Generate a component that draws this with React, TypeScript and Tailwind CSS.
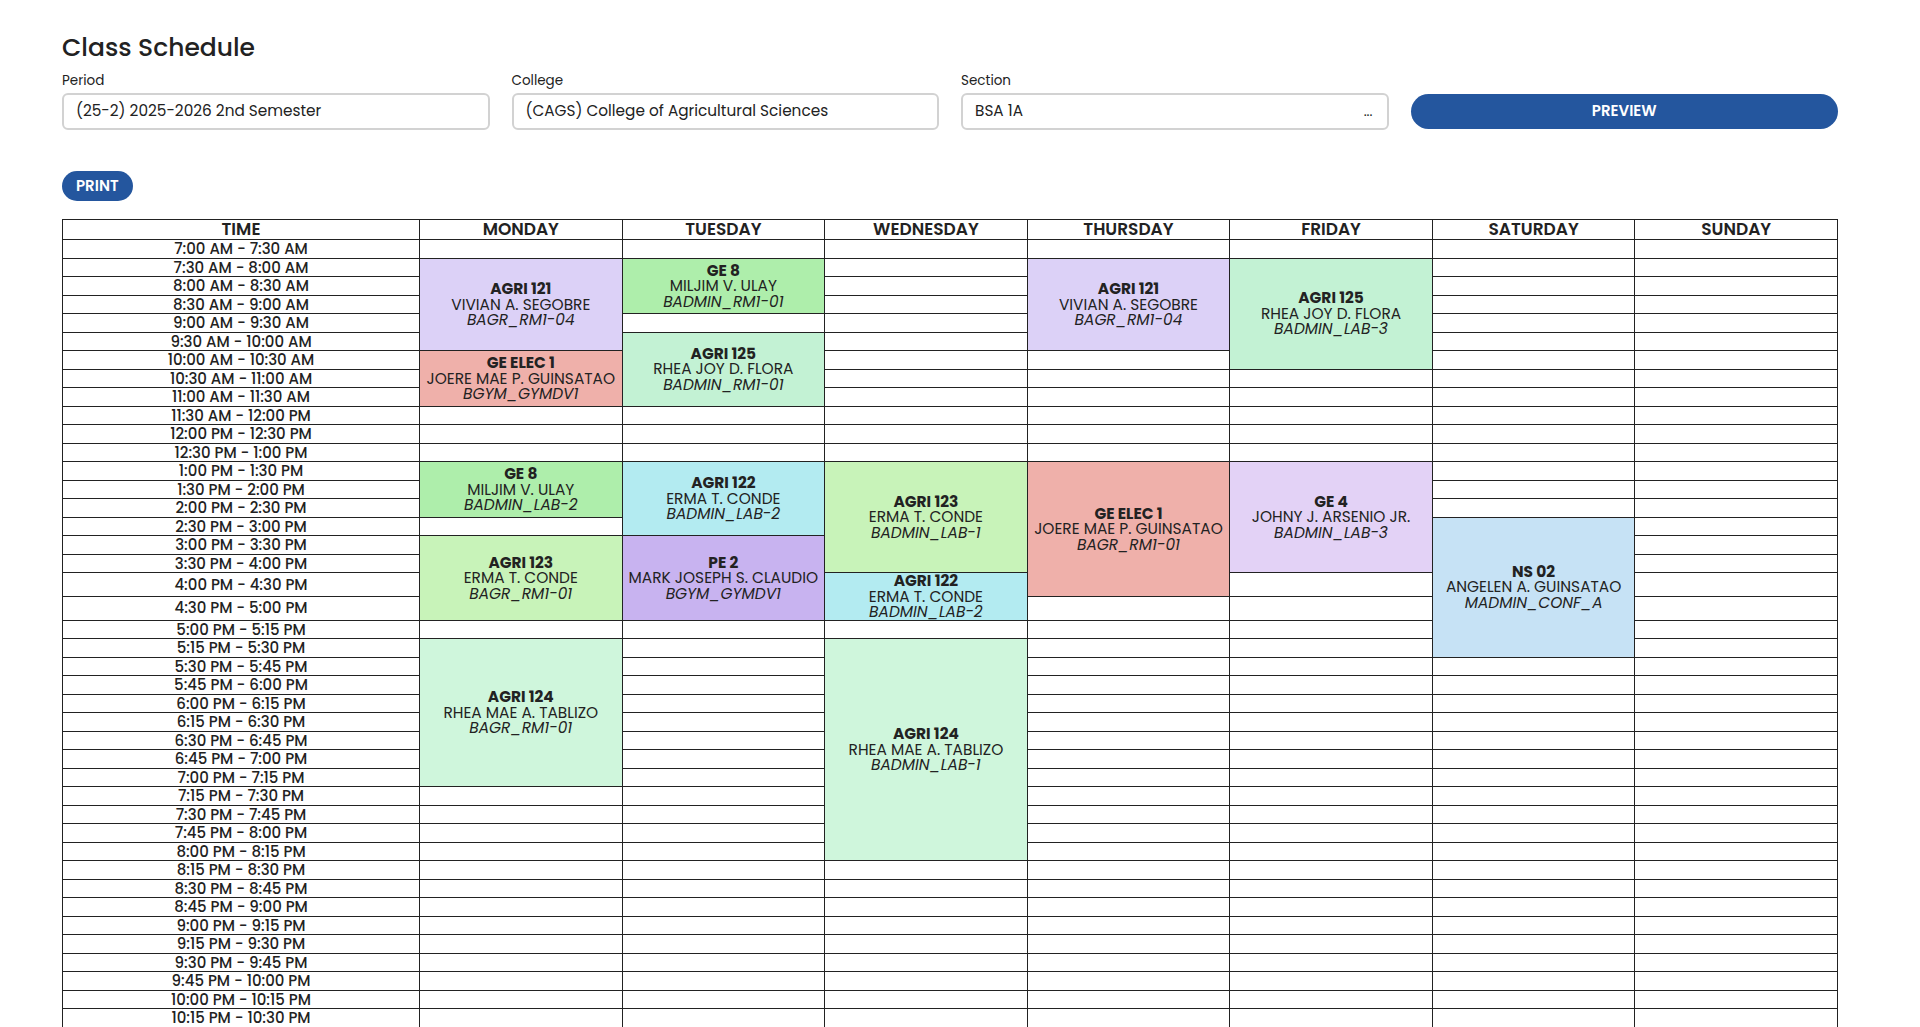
import { useMemo } from "react";

type Block = {
  day: number;
  start: number;
  span: number;
  code: string;
  teacher: string;
  room: string;
  bg: string;
};

const days = ["MONDAY", "TUESDAY", "WEDNESDAY", "THURSDAY", "FRIDAY", "SATURDAY", "SUNDAY"];

const fmt = (mins: number) => {
  const h = Math.floor(mins / 60);
  const m = mins % 60;
  const suffix = h >= 12 ? "PM" : "AM";
  const h12 = h % 12 === 0 ? 12 : h % 12;
  return `${h12}:${m.toString().padStart(2, "0")} ${suffix}`;
};

function buildSlots() {
  const slots: string[] = [];
  for (let t = 7 * 60; t < 17 * 60; t += 30) slots.push(`${fmt(t)} - ${fmt(t + 30)}`);
  for (let t = 17 * 60; t < 23 * 60; t += 15) slots.push(`${fmt(t)} - ${fmt(t + 15)}`);
  return slots;
}

const blocks: Block[] = [
  { day: 0, start: 1, span: 5, code: "AGRI 121", teacher: "VIVIAN A. SEGOBRE", room: "BAGR_RM1-04", bg: "bg-[#dcd1f7]" },
  { day: 0, start: 6, span: 3, code: "GE ELEC 1", teacher: "JOERE MAE P. GUINSATAO", room: "BGYM_GYMDV1", bg: "bg-[#efb0aa]" },
  { day: 0, start: 12, span: 3, code: "GE 8", teacher: "MILJIM V. ULAY", room: "BADMIN_LAB-2", bg: "bg-[#aeeeab]" },
  { day: 0, start: 16, span: 4, code: "AGRI 123", teacher: "ERMA T. CONDE", room: "BAGR_RM1-01", bg: "bg-[#c8f3b9]" },
  { day: 0, start: 21, span: 8, code: "AGRI 124", teacher: "RHEA MAE A. TABLIZO", room: "BAGR_RM1-01", bg: "bg-[#cff6dc]" },
  { day: 1, start: 1, span: 3, code: "GE 8", teacher: "MILJIM V. ULAY", room: "BADMIN_RM1-01", bg: "bg-[#aeeeab]" },
  { day: 1, start: 5, span: 4, code: "AGRI 125", teacher: "RHEA JOY D. FLORA", room: "BADMIN_RM1-01", bg: "bg-[#c3f2d4]" },
  { day: 1, start: 12, span: 4, code: "AGRI 122", teacher: "ERMA T. CONDE", room: "BADMIN_LAB-2", bg: "bg-[#b3ebf1]" },
  { day: 1, start: 16, span: 4, code: "PE 2", teacher: "MARK JOSEPH S. CLAUDIO", room: "BGYM_GYMDV1", bg: "bg-[#c8b3f0]" },
  { day: 2, start: 12, span: 6, code: "AGRI 123", teacher: "ERMA T. CONDE", room: "BADMIN_LAB-1", bg: "bg-[#c8f3b9]" },
  { day: 2, start: 18, span: 2, code: "AGRI 122", teacher: "ERMA T. CONDE", room: "BADMIN_LAB-2", bg: "bg-[#b3ebf1]" },
  { day: 2, start: 21, span: 12, code: "AGRI 124", teacher: "RHEA MAE A. TABLIZO", room: "BADMIN_LAB-1", bg: "bg-[#cff6dc]" },
  { day: 3, start: 1, span: 5, code: "AGRI 121", teacher: "VIVIAN A. SEGOBRE", room: "BAGR_RM1-04", bg: "bg-[#dcd1f7]" },
  { day: 3, start: 12, span: 7, code: "GE ELEC 1", teacher: "JOERE MAE P. GUINSATAO", room: "BAGR_RM1-01", bg: "bg-[#efb0aa]" },
  { day: 4, start: 1, span: 6, code: "AGRI 125", teacher: "RHEA JOY D. FLORA", room: "BADMIN_LAB-3", bg: "bg-[#c3f2d4]" },
  { day: 4, start: 12, span: 6, code: "GE 4", teacher: "JOHNY J. ARSENIO JR.", room: "BADMIN_LAB-3", bg: "bg-[#e3d2f6]" },
  { day: 5, start: 15, span: 7, code: "NS 02", teacher: "ANGELEN A. GUINSATAO", room: "MADMIN_CONF_A", bg: "bg-[#c6e2f5]" },
];

function Field({ label, value, dots }: { label: string; value: string; dots?: boolean }) {
  return (
    <div className="flex flex-col">
      <span className="text-[13.5px] leading-[18px] mb-[3px]">{label}</span>
      <div className="h-[37px] rounded-md border-2 border-[#d2d2d2] pl-[12px] pr-[14px] flex items-center justify-between text-[15.3px]">
        <span>{value}</span>
        {dots && <span className="text-[14px]">...</span>}
      </div>
    </div>
  );
}

export default function App() {
  const slots = useMemo(buildSlots, []);

  const rows = useMemo(() => {
    return slots.map((label, r) => {
      const cells = days.map((_, d) => {
        const starting = blocks.find((b) => b.day === d && b.start === r);
        if (starting) return { kind: "block" as const, block: starting };
        const covered = blocks.some((b) => b.day === d && r > b.start && r < b.start + b.span);
        if (covered) return { kind: "skip" as const };
        return { kind: "empty" as const };
      });
      return { label, cells };
    });
  }, [slots]);

  return (
    <div className="min-h-screen bg-white text-[#222] font-['Poppins',Inter,sans-serif]">
      <div className="pl-[62px] pt-[32px] pb-14">
        <div className="w-[1776px]">
          <h1 className="text-[25px] leading-8 font-medium">Class Schedule</h1>

          <div className="grid grid-cols-4 gap-[22px] items-end mt-2">
            <Field label="Period" value="(25-2) 2025-2026 2nd Semester" />
            <Field label="College" value="(CAGS) College of Agricultural Sciences" />
            <Field label="Section" value="BSA 1A" dots />
            <button
              type="button"
              className="h-[35px] mb-px rounded-full bg-[#24569e] text-white text-[15px] font-semibold"
            >
              PREVIEW
            </button>
          </div>

          <button
            type="button"
            className="mt-[41px] h-[30px] px-[14px] rounded-full bg-[#24569e] text-white text-[15px] font-semibold"
          >
            PRINT
          </button>

          <table className="mt-[18px] w-full table-fixed border-collapse border border-[#222]">
            <colgroup>
              <col className="w-[357px]" />
              {days.map((d) => (
                <col key={d} />
              ))}
            </colgroup>
            <thead>
              <tr>
                <th className="border border-[#222] text-[17px] leading-[19px] font-semibold">TIME</th>
                {days.map((d) => (
                  <th key={d} className="border border-[#222] text-[17px] leading-[19px] font-semibold">
                    {d}
                  </th>
                ))}
              </tr>
            </thead>
            <tbody>
              {rows.map((row) => (
                <tr key={row.label}>
                  <td className="border border-[#222] text-center text-[15px] leading-[17.5px] font-medium">
                    {row.label}
                  </td>
                  {row.cells.map((c, d) => {
                    if (c.kind === "skip") return null;
                    if (c.kind === "empty") return <td key={d} className="border border-[#222]" />;
                    const b = c.block;
                    return (
                      <td
                        key={d}
                        rowSpan={b.span}
                        className={`border border-[#222] text-center align-middle text-[15.4px] leading-[15.5px] whitespace-nowrap ${b.bg}`}
                      >
                        <div className="font-bold">{b.code}</div>
                        <div>{b.teacher}</div>
                        <div className="italic">{b.room}</div>
                      </td>
                    );
                  })}
                </tr>
              ))}
            </tbody>
          </table>
        </div>
      </div>
    </div>
  );
}
